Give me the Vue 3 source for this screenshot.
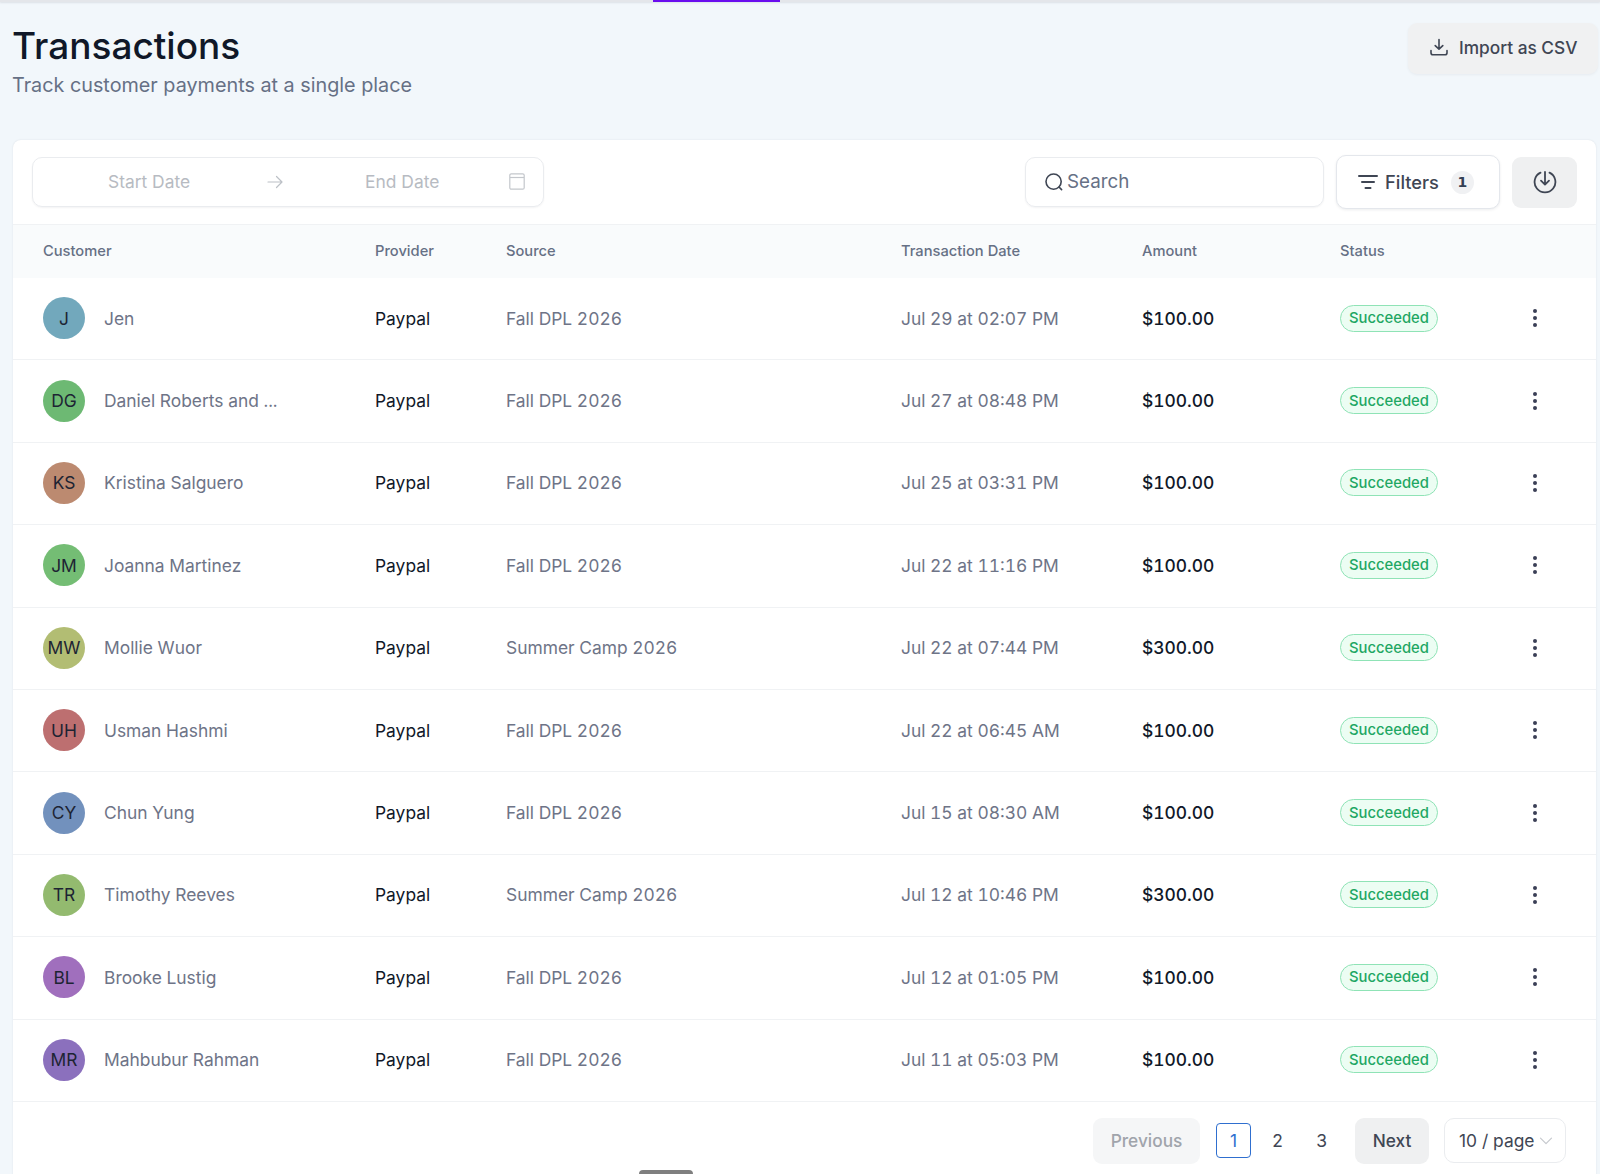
<template>
  <div class="page">
    <div class="topbar"><span class="topbar-active"></span></div>

    <header class="head">
      <div>
        <h1 class="title">Transactions</h1>
        <p class="subtitle">Track customer payments at a single place</p>
      </div>
      <button class="import-btn">
        <svg width="20" height="20" viewBox="0 0 20 20" fill="none" stroke="#3f4654" stroke-width="1.6" stroke-linecap="round" stroke-linejoin="round">
          <path d="M10 2.5v9.5M6.2 8.6 10 12.2l3.8-3.6" />
          <path d="M2 13.5v2.2c0 1.2.9 2.1 2.1 2.1h11.8c1.2 0 2.1-.9 2.1-2.1v-2.2" />
        </svg>
        Import as CSV
      </button>
    </header>

    <section class="card">
      <div class="toolbar">
        <div class="date-range">
          <span class="date-start">Start Date</span>
          <svg class="date-arrow" width="18" height="14" viewBox="0 0 18 14" fill="none" stroke="#bcc0c6" stroke-width="1.2" stroke-linecap="round" stroke-linejoin="round">
            <path d="M2 7h14M10.500 1.500 16 7l-5.500 5.500" />
          </svg>
          <span class="date-end">End Date</span>
          <svg class="date-cal" width="16" height="17" viewBox="0 0 16 17" fill="none" stroke="#c4c7cc" stroke-width="1.2">
            <rect x="0.800" y="0.800" width="14.400" height="15.400" rx="1.500" />
            <path d="M1 4.500h14" />
          </svg>
        </div>
        <div class="search">
          <svg width="20" height="20" viewBox="0 0 20 20" fill="none" stroke="#3f4654" stroke-width="1.6" stroke-linecap="round">
            <circle cx="9.600" cy="9.600" r="7.600" />
            <path d="m15 15 2.600 2.600" />
          </svg>
          <span>Search</span>
        </div>
        <button class="filters-btn">
          <svg width="20" height="16" viewBox="0 0 20 16" fill="none" stroke="#3f4654" stroke-width="2" stroke-linecap="round">
            <path d="M1 2h18M4 8h12M7.500 14h5" />
          </svg>
          Filters
          <span class="filters-count">1</span>
        </button>
        <button class="export-btn">
          <svg width="24" height="24" viewBox="0 0 24 24" fill="none" stroke="#3f4654" stroke-width="1.800" stroke-linecap="round" stroke-linejoin="round">
            <path d="M7.500 2.600a10.400 10.400 0 1 0 9 0" />
            <path d="M12 2v12.500M8 10.700l4 4 4-4" />
          </svg>
        </button>
      </div>

      <div class="row row--head">
        <span>Customer</span>
        <span>Provider</span>
        <span>Source</span>
        <span>Transaction Date</span>
        <span>Amount</span>
        <span>Status</span>
        <span></span>
      </div>

      <div v-for="t in transactions" :key="t.name" class="row row--body">
        <div class="customer">
          <span class="avatar" :style="{ background: t.color }">{{ t.initials }}</span>
          <span class="muted">{{ t.name }}</span>
        </div>
        <span class="strong">Paypal</span>
        <span class="muted">{{ t.source }}</span>
        <span class="muted">{{ t.date }}</span>
        <span class="strong amount">{{ t.amount }}</span>
        <span><span class="badge">Succeeded</span></span>
        <span class="kebab"><i></i><i></i><i></i></span>
      </div>

      <div class="pager">
        <button class="pg-btn pg-btn--off">Previous</button>
        <span class="pg-num pg-num--on">1</span>
        <span class="pg-num">2</span>
        <span class="pg-num">3</span>
        <button class="pg-btn pg-btn--next">Next</button>
        <div class="page-size">
          10 / page
          <svg width="14" height="8" viewBox="0 0 14 8" fill="none" stroke="#c6c9ce" stroke-width="1.2" stroke-linecap="round" stroke-linejoin="round">
            <path d="m1.500 1.200 5.500 5.500 5.500-5.500" />
          </svg>
        </div>
      </div>
    </section>

    <span class="handle"></span>
  </div>
</template>

<script setup>
const transactions = [
  { initials: 'J', name: 'Jen', color: '#72a8bc', source: 'Fall DPL 2026', date: 'Jul 29 at 02:07 PM', amount: '$100.00' },
  { initials: 'DG', name: 'Daniel Roberts and ...', color: '#6db973', source: 'Fall DPL 2026', date: 'Jul 27 at 08:48 PM', amount: '$100.00' },
  { initials: 'KS', name: 'Kristina Salguero', color: '#bc8a70', source: 'Fall DPL 2026', date: 'Jul 25 at 03:31 PM', amount: '$100.00' },
  { initials: 'JM', name: 'Joanna Martinez', color: '#74bd74', source: 'Fall DPL 2026', date: 'Jul 22 at 11:16 PM', amount: '$100.00' },
  { initials: 'MW', name: 'Mollie Wuor', color: '#b2bd73', source: 'Summer Camp 2026', date: 'Jul 22 at 07:44 PM', amount: '$300.00' },
  { initials: 'UH', name: 'Usman Hashmi', color: '#bd6f70', source: 'Fall DPL 2026', date: 'Jul 22 at 06:45 AM', amount: '$100.00' },
  { initials: 'CY', name: 'Chun Yung', color: '#7291bd', source: 'Fall DPL 2026', date: 'Jul 15 at 08:30 AM', amount: '$100.00' },
  { initials: 'TR', name: 'Timothy Reeves', color: '#93ba6f', source: 'Summer Camp 2026', date: 'Jul 12 at 10:46 PM', amount: '$300.00' },
  { initials: 'BL', name: 'Brooke Lustig', color: '#a06fbd', source: 'Fall DPL 2026', date: 'Jul 12 at 01:05 PM', amount: '$100.00' },
  { initials: 'MR', name: 'Mahbubur Rahman', color: '#8b70bd', source: 'Fall DPL 2026', date: 'Jul 11 at 05:03 PM', amount: '$100.00' },
];
</script>

<style>
html,
body {
  margin: 0;
  overflow: hidden;
}
</style>

<style scoped>
.page {
  position: relative;
  height: 1174px;
  overflow: hidden;
  background: #f2f7fb;
  font-family: Inter, "Liberation Sans", sans-serif;
  color: #101828;
}

.topbar {
  height: 2px;
  background: #e4e6ea;
  box-shadow: 0 1px 2px rgba(16, 24, 40, 0.1);
  padding-left: 653px;
}

.topbar-active {
  display: block;
  width: 127px;
  height: 2px;
  background: #6a0dee;
}

.head {
  display: flex;
  justify-content: space-between;
  align-items: flex-start;
  height: 138px;
  box-sizing: border-box;
  padding: 21px 2px 0 12px;
}

.title {
  margin: 0;
  font-size: 37px;
  line-height: 46px;
  font-weight: 500;
  color: #101828;
}

.subtitle {
  margin: 2px 0 0;
  font-size: 19.800px;
  line-height: 28px;
  color: #667085;
}

.import-btn {
  display: flex;
  align-items: center;
  gap: 10px;
  width: 190px;
  height: 51px;
  box-sizing: border-box;
  padding: 0 0 3px 21px;
  border: none;
  border-radius: 9px;
  background: #f0f1f2;
  box-shadow: 0 1px 3px rgba(16, 24, 40, 0.05);
  font: 500 17.300px Inter, sans-serif;
  color: #3f4654;
}

.card {
  margin: 0 4px 0 13px;
  height: 1040px;
  background: #fff;
  border-radius: 8px 8px 0 0;
  box-shadow: 0 0 2px rgba(16, 24, 40, 0.1);
}

.toolbar {
  display: flex;
  align-items: center;
  height: 85px;
  box-sizing: border-box;
  padding: 0 19px;
  border-bottom: 1px solid #f0f2f4;
}

.date-range {
  display: flex;
  align-items: center;
  width: 512px;
  height: 50px;
  box-sizing: border-box;
  padding-bottom: 1px;
  border: 1px solid #eaecef;
  border-radius: 10px;
  box-shadow: 0 1px 2px rgba(16, 24, 40, 0.05);
  font-size: 17.400px;
  color: #b7bbc2;
}

.date-start {
  margin-left: 75px;
}

.date-arrow {
  margin-left: 76px;
}

.date-end {
  margin-left: 81px;
}

.date-cal {
  margin-left: 70px;
}

.search {
  display: flex;
  align-items: center;
  gap: 3px;
  width: 299px;
  height: 50px;
  box-sizing: border-box;
  margin-left: auto;
  padding: 0 0 1px 18px;
  border: 1px solid #eaecef;
  border-radius: 10px;
  box-shadow: 0 1px 2px rgba(16, 24, 40, 0.05);
  font-size: 18.800px;
  color: #667085;
}

.filters-btn {
  display: flex;
  align-items: center;
  gap: 7px;
  width: 164px;
  height: 54px;
  box-sizing: border-box;
  margin-left: 12px;
  padding: 0 0 0 21px;
  border: 1px solid #e4e7ec;
  border-radius: 10px;
  background: #fff;
  box-shadow: 0 1px 3px rgba(16, 24, 40, 0.08);
  font: 500 18.300px Inter, sans-serif;
  color: #3f4654;
}

.filters-count {
  display: flex;
  align-items: center;
  justify-content: center;
  width: 23px;
  height: 23px;
  margin-left: 5px;
  border-radius: 50%;
  background: #f0f1f3;
  font: 700 14px "DejaVu Sans", sans-serif;
  color: #344054;
}

.export-btn {
  display: flex;
  align-items: center;
  justify-content: center;
  width: 65px;
  height: 51px;
  margin-left: 12px;
  border: none;
  border-radius: 9px;
  background: #eff0f1;
}

.row {
  display: grid;
  grid-template-columns: 332px 131px 395px 241px 198px 1fr 122px;
  align-items: center;
  padding-left: 30px;
  border-bottom: 1px solid #f0f2f4;
  font-variant-numeric: tabular-nums;
}

.row--head {
  height: 53px;
  box-sizing: border-box;
  padding-bottom: 2px;
  border-bottom: none;
  background: #f9fbfc;
  font-size: 14.700px;
  font-weight: 500;
  color: #667085;
}

.row--body {
  height: 82.400px;
  box-sizing: border-box;
  padding-bottom: 1px;
  font-size: 17.400px;
}

.customer {
  display: flex;
  align-items: center;
  gap: 19px;
}

.avatar {
  display: flex;
  align-items: center;
  justify-content: center;
  width: 42px;
  height: 42px;
  border-radius: 50%;
  font-size: 17.400px;
  color: #1d2433;
}

.muted {
  color: #6e7487;
}

.strong {
  color: #101828;
}

.amount {
  font-weight: 500;
}

.badge {
  display: inline-flex;
  align-items: center;
  height: 27px;
  box-sizing: border-box;
  padding: 0 8px;
  border: 1px solid #8fe3b6;
  border-radius: 14px;
  background: #ecfdf3;
  font-size: 14.800px;
  font-weight: 500;
  color: #1fa763;
}

.kebab {
  display: flex;
  flex-direction: column;
  align-items: center;
  gap: 3px;
}

.kebab i {
  width: 4px;
  height: 4px;
  border-radius: 50%;
  background: #3a3f56;
}

.pager {
  display: flex;
  align-items: center;
  justify-content: flex-end;
  height: 78px;
  padding-right: 30px;
}

.pg-btn {
  height: 46px;
  border: none;
  border-radius: 9px;
  font: 500 17.300px Inter, sans-serif;
}

.pg-btn--off {
  width: 107px;
  background: #f5f6f7;
  color: #a0a4ab;
}

.pg-btn--next {
  width: 74px;
  margin-left: 7px;
  background: #eff0f1;
  color: #3f4654;
}

.pg-num {
  display: flex;
  align-items: center;
  justify-content: center;
  width: 35px;
  height: 35px;
  margin-right: 9px;
  font-size: 17.400px;
  color: #3f4654;
}

.pg-num--on {
  box-sizing: border-box;
  margin-left: 16px;
  border: 1px solid #2f6fcf;
  border-radius: 4px;
  color: #2f6fcf;
}

.page-size {
  display: flex;
  align-items: center;
  gap: 5px;
  width: 122px;
  height: 45px;
  box-sizing: border-box;
  margin-left: 15px;
  padding-left: 14px;
  border: 1px solid #eaecef;
  border-radius: 10px;
  font-size: 17.400px;
  color: #3f4654;
}

.handle {
  position: absolute;
  left: 639px;
  bottom: 0;
  width: 54px;
  height: 4px;
  border-radius: 4px 4px 0 0;
  background: #7f7f7f;
}
</style>
